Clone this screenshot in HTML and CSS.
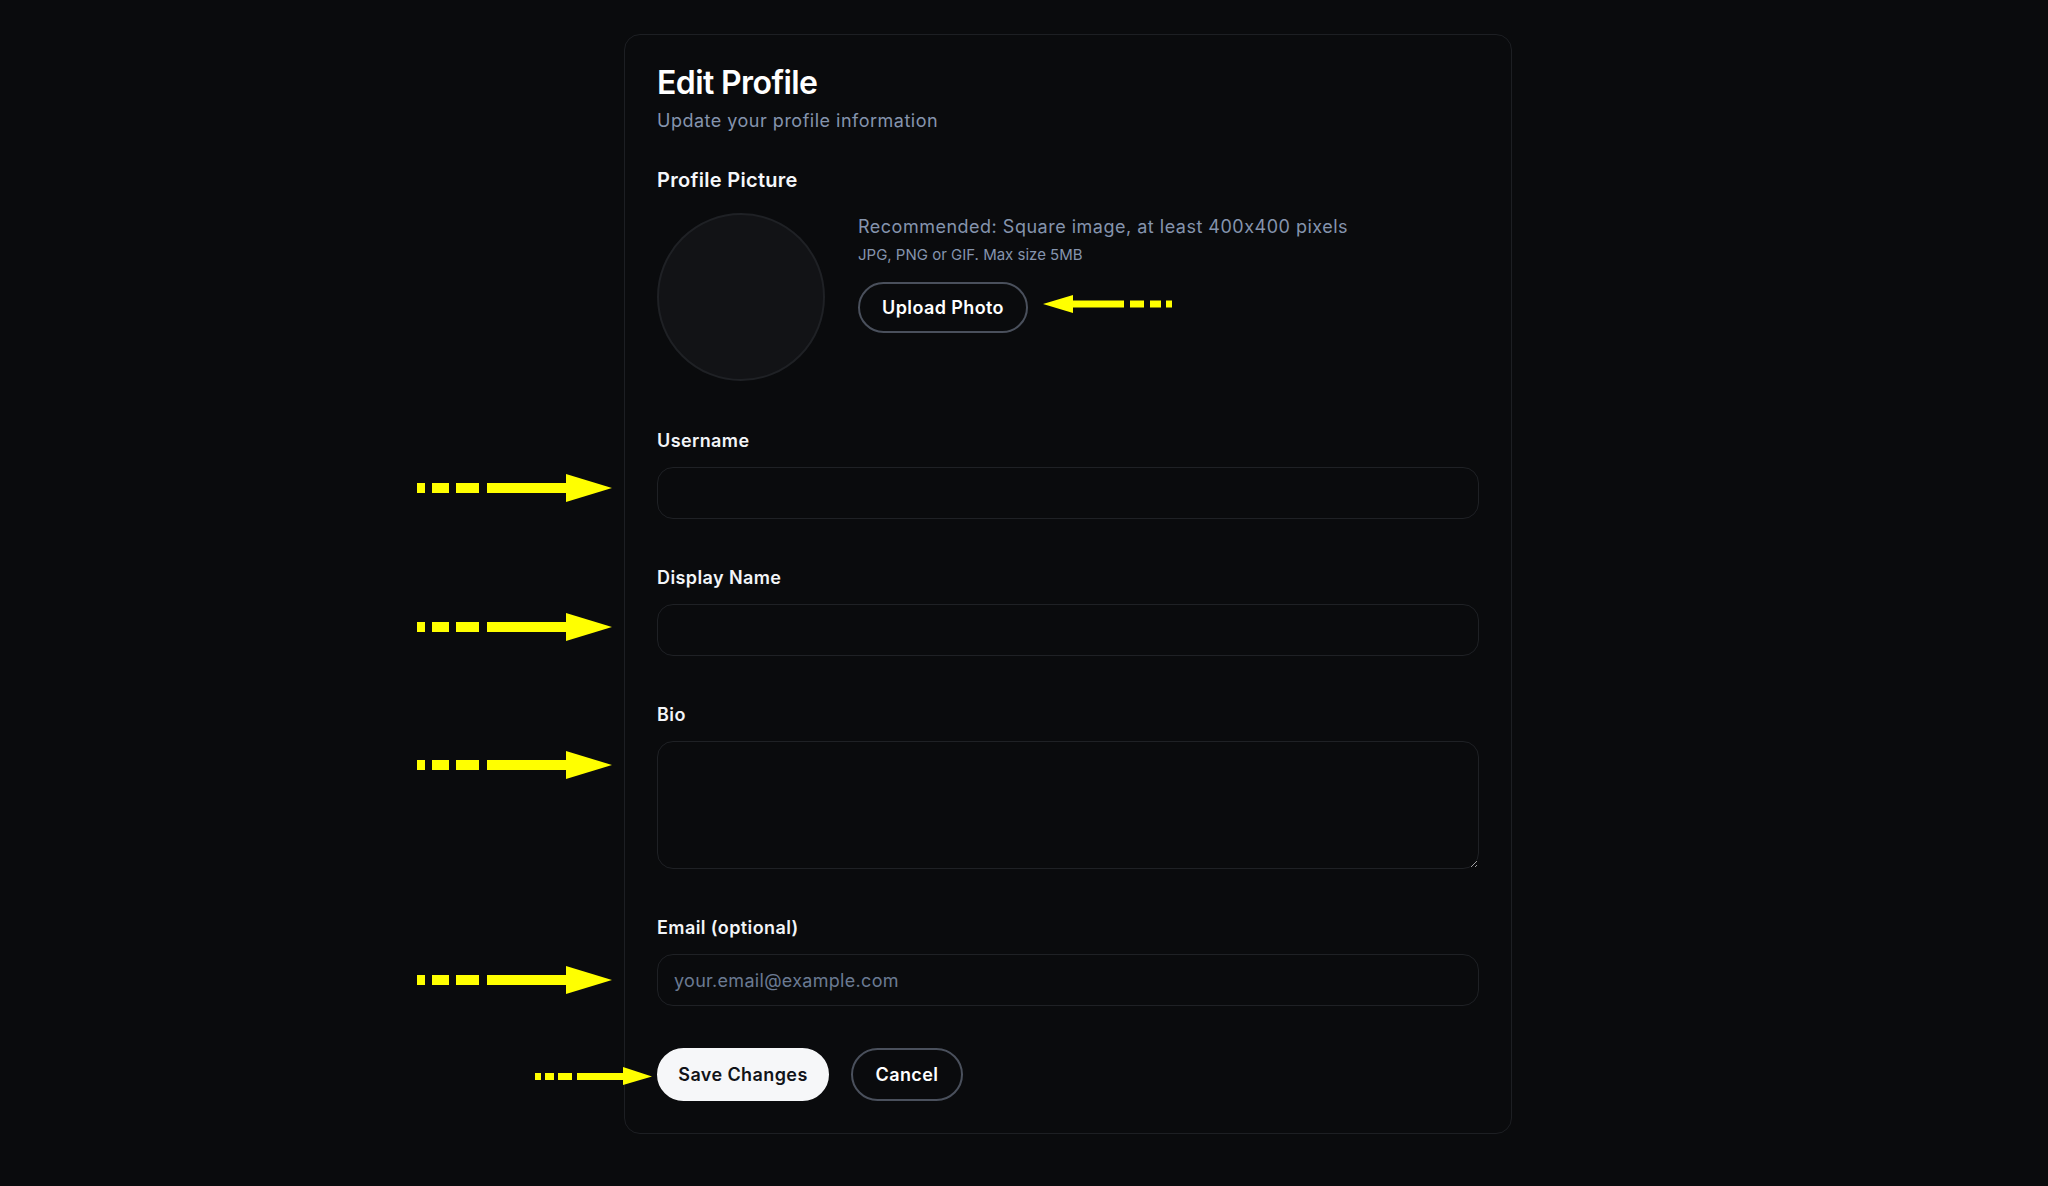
FILE: index.html
```html
<!DOCTYPE html>
<html lang="en">
<head>
<meta charset="utf-8">
<title>Edit Profile</title>
<link rel="stylesheet" href="styles.css">
</head>
<body>
<main class="card">
  <header class="head">
    <h1 class="title">Edit Profile</h1>
    <p class="subtitle">Update your profile information</p>
  </header>

  <section class="picture">
    <h2 class="section-title">Profile Picture</h2>
    <div class="picture-row">
      <div class="avatar"></div>
      <div class="picture-info">
        <p class="hint">Recommended: Square image, at least 400x400 pixels</p>
        <p class="hint-small">JPG, PNG or GIF. Max size 5MB</p>
        <button class="btn btn-outline btn-upload" type="button">Upload Photo</button>
      </div>
    </div>
  </section>

  <form class="form">
    <div class="field">
      <label class="label" for="username">Username</label>
      <input class="input" id="username" type="text">
    </div>
    <div class="field">
      <label class="label" for="display">Display Name</label>
      <input class="input" id="display" type="text">
    </div>
    <div class="field">
      <label class="label" for="bio">Bio</label>
      <textarea class="input textarea" id="bio"></textarea>
    </div>
    <div class="field field-last">
      <label class="label" for="email">Email (optional)</label>
      <input class="input" id="email" type="email" placeholder="your.email@example.com">
    </div>
    <div class="actions">
      <button class="btn btn-primary" type="button">Save Changes</button>
      <button class="btn btn-outline btn-cancel" type="button">Cancel</button>
    </div>
  </form>
</main>

<div class="notes" aria-hidden="true">
  <svg class="arrow arrow-user" width="196" height="30" viewBox="0 0 196 30"><g fill="#ffff00"><rect x="0" y="10" width="8" height="10"/><rect x="15" y="10" width="17" height="10"/><rect x="39" y="10" width="23" height="10"/><rect x="70" y="10" width="81" height="10"/><polygon points="149,1 195,15 149,29"/></g></svg>
  <svg class="arrow arrow-display" width="196" height="30" viewBox="0 0 196 30"><g fill="#ffff00"><rect x="0" y="10" width="8" height="10"/><rect x="15" y="10" width="17" height="10"/><rect x="39" y="10" width="23" height="10"/><rect x="70" y="10" width="81" height="10"/><polygon points="149,1 195,15 149,29"/></g></svg>
  <svg class="arrow arrow-bio" width="196" height="30" viewBox="0 0 196 30"><g fill="#ffff00"><rect x="0" y="10" width="8" height="10"/><rect x="15" y="10" width="17" height="10"/><rect x="39" y="10" width="23" height="10"/><rect x="70" y="10" width="81" height="10"/><polygon points="149,1 195,15 149,29"/></g></svg>
  <svg class="arrow arrow-email" width="196" height="30" viewBox="0 0 196 30"><g fill="#ffff00"><rect x="0" y="10" width="8" height="10"/><rect x="15" y="10" width="17" height="10"/><rect x="39" y="10" width="23" height="10"/><rect x="70" y="10" width="81" height="10"/><polygon points="149,1 195,15 149,29"/></g></svg>
  <svg class="arrow arrow-save" width="118" height="20" viewBox="0 0 118 20"><g fill="#ffff00"><rect x="0" y="7" width="6" height="7"/><rect x="10" y="7" width="9" height="7"/><rect x="23" y="7" width="14" height="7"/><rect x="42" y="7" width="50" height="7"/><polygon points="88,1 117,10.5 88,19"/></g></svg>
  <svg class="arrow arrow-upload" width="130" height="20" viewBox="0 0 130 20"><g fill="#ffff00"><polygon points="0,10 30,1 30,19"/><rect x="29" y="6.5" width="52" height="7"/><rect x="87" y="6.5" width="14" height="7"/><rect x="107" y="6.5" width="11" height="7"/><rect x="123" y="6.5" width="6" height="7"/></g></svg>
</div>
</body>
</html>
```

FILE: styles.css
```css
* { box-sizing: border-box; }

html, body {
  margin: 0;
  padding: 0;
  background: #0a0b0d;
}

body {
  min-height: 1186px;
  font-family: Inter, "Noto Sans", "Liberation Sans", sans-serif;
  font-feature-settings: "calt" 0;
  color: #f3f5f8;
  position: relative;
  padding-top: 34px;
}

.card {
  width: 888px;
  margin-left: 624px;
  border: 1px solid #1d1f23;
  border-radius: 16px;
  background: #0a0b0d;
  padding: 32px 32px 32px;
}

.head { margin-bottom: 31px; }

.title {
  margin: 0;
  font-size: 32px;
  line-height: 32px;
  font-weight: 600;
  letter-spacing: -0.6px;
  color: #ffffff;
}

.subtitle {
  margin: 8px 0 0;
  font-size: 18px;
  line-height: 28px;
  letter-spacing: 0.5px;
  color: #8594ad;
}

.section-title {
  margin: 0 0 19px;
  font-size: 20px;
  line-height: 28px;
  font-weight: 600;
  letter-spacing: 0.3px;
  color: #f5f7fa;
}

.picture { margin-bottom: 48px; }

.picture-row {
  display: flex;
  align-items: flex-start;
  gap: 33px;
}

.avatar {
  width: 168px;
  height: 168px;
  flex: none;
  border-radius: 50%;
  background: #121316;
  border: 2px solid #1f2125;
}

.picture-info {
  display: flex;
  flex-direction: column;
  align-items: flex-start;
}

.hint {
  margin: 0;
  font-size: 18px;
  line-height: 28px;
  letter-spacing: 0.5px;
  color: #8594ad;
}

.hint-small {
  margin: 4px 0 0;
  font-size: 15px;
  line-height: 20px;
  color: #8594ad;
}

.btn {
  font-family: inherit;
  font-size: 18px;
  font-weight: 600;
  line-height: 23px;
  letter-spacing: 0.4px;
  border-radius: 999px;
  cursor: pointer;
  display: inline-flex;
  align-items: center;
  justify-content: center;
  padding: 0;
}

.btn-outline {
  background: transparent;
  color: #ffffff;
  border: 2px solid #4a505c;
}

.btn-upload {
  margin-top: 17px;
  width: 170px;
  height: 51px;
}

.form {
  display: flex;
  flex-direction: column;
}

.field {
  display: flex;
  flex-direction: column;
  margin-bottom: 47px;
}

.field-last { margin-bottom: 42px; }

.label {
  font-size: 18px;
  line-height: 24px;
  font-weight: 600;
  letter-spacing: 0.4px;
  color: #f3f5f8;
  margin-bottom: 14px;
}

.input {
  width: 100%;
  height: 52px;
  border: 1px solid #1f2125;
  border-radius: 16px;
  background: #0a0b0d;
  color: #f3f5f8;
  font-family: inherit;
  font-size: 18px;
  letter-spacing: 0.3px;
  padding: 0 16px;
  outline: none;
}

.input::placeholder { color: #6a7a92; }

.textarea {
  height: 128px;
  resize: vertical;
  padding: 12px 16px;
  display: block;
}

.actions {
  display: flex;
  gap: 22px;
}

.btn-primary {
  width: 172px;
  height: 53px;
  background: #f6f7f9;
  color: #111318;
  border: 2px solid #f6f7f9;
}

.btn-cancel {
  width: 112px;
  height: 53px;
}

.notes {
  position: absolute;
  inset: 0;
  pointer-events: none;
}

.arrow { position: absolute; display: block; }
.arrow-user { left: 417px; top: 473px; }
.arrow-display { left: 417px; top: 612px; }
.arrow-bio { left: 417px; top: 750px; }
.arrow-email { left: 417px; top: 965px; }
.arrow-save { left: 535px; top: 1066px; }
.arrow-upload { left: 1043px; top: 294px; }
```
